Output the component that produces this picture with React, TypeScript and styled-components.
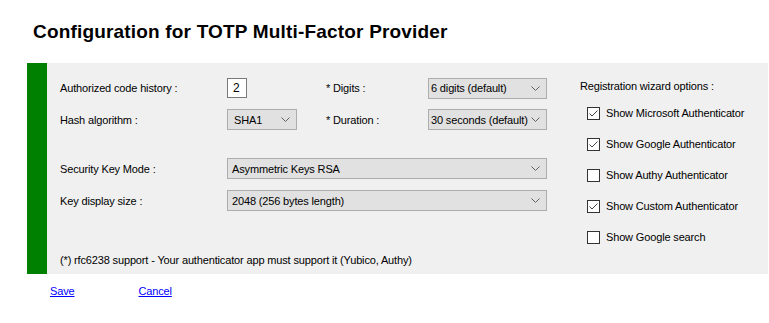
import React from "react";
import styled, { createGlobalStyle } from "styled-components";

const Global = createGlobalStyle`
  html, body { margin: 0; padding: 0; background: #ffffff; }
  body { font-family: "Liberation Sans", Arial, sans-serif; color: #000; }
`;

const Page = styled.div`
  width: 769px;
  height: 323px;
  display: flex;
  flex-direction: column;
  overflow: hidden;
`;

const Title = styled.h1`
  margin: 0;
  padding: 20px 0 0 33px;
  height: 63px;
  box-sizing: border-box;
  font-family: "Liberation Sans", Arial, sans-serif;
  font-weight: bold;
  font-size: 19px;
  letter-spacing: 0.18px;
  line-height: 24px;
`;

const Panel = styled.div`
  margin-left: 27px;
  width: 741px;
  height: 211px;
  display: flex;
  background: #f0f0f0;
`;

const GreenBar = styled.div`
  width: 20px;
  flex: none;
  background: #008000;
`;

const Body = styled.div`
  flex: 1;
  display: flex;
  flex-direction: column;
  padding: 0 0 0 13px;
  font-size: 11px;
  letter-spacing: -0.15px;
`;

const Top = styled.div`
  display: flex;
  gap: 33px;
`;

const Form = styled.div`
  padding-top: 15px;
  display: grid;
  grid-template-columns: 167px 99px 102px 119px;
  grid-template-rows: 20px 21px 6px 21px 21px;
  row-gap: 11px;
  align-items: center;
`;

const Label = styled.div`
  line-height: 14px;
`;

const Spacer = styled.div`
  grid-column: 1 / -1;
`;

const TextBox = styled.div`
  width: 20px;
  height: 20px;
  box-sizing: border-box;
  border: 1px solid #7a7a7a;
  background: #fff;
  font-size: 12px;
  line-height: 18px;
  padding-left: 5px;
`;

const SelectBox = styled.div<{ $width: number; $span?: boolean; $pad: number }>`
  width: ${(p) => p.$width}px;
  height: 21px;
  box-sizing: border-box;
  border: 1px solid #adadad;
  background: #e1e1e1;
  display: flex;
  align-items: center;
  justify-content: space-between;
  padding: 0 6px 0 ${(p) => p.$pad}px;
  grid-column: ${(p) => (p.$span ? "2 / -1" : "auto")};
  white-space: nowrap;
  overflow: hidden;
`;

const Chevron = () => (
  <svg width="9" height="5" viewBox="0 0 9 5" style={{ flex: "none" }}>
    <path d="M0.5 0.5 L4.5 4.5 L8.5 0.5" fill="none" stroke="#606060" strokeWidth="1" />
  </svg>
);

const Select = ({ value, width, span, pad = 2 }: { value: string; width: number; span?: boolean; pad?: number }) => (
  <SelectBox $width={width} $span={span} $pad={pad}>
    <span>{value}</span>
    <Chevron />
  </SelectBox>
);

const Options = styled.div`
  padding-top: 16px;
  display: flex;
  flex-direction: column;
  gap: 17px;
`;

const OptionsTitle = styled.div`
  line-height: 14px;
  margin-bottom: -4px;
`;

const CheckRow = styled.label`
  display: flex;
  align-items: center;
  gap: 6px;
  height: 14px;
  margin-left: 7px;
`;

const Box = styled.span`
  width: 13px;
  height: 13px;
  box-sizing: border-box;
  border: 1px solid #333;
  background: #fff;
  display: flex;
  align-items: center;
  justify-content: center;
`;

const Check = ({ checked, label }: { checked: boolean; label: string }) => (
  <CheckRow>
    <Box>
      {checked && (
        <svg width="11" height="11" viewBox="0 0 11 11">
          <path d="M1.5 5.5 L4 8 L9.5 2.5" fill="none" stroke="#444" strokeWidth="1" />
        </svg>
      )}
    </Box>
    <span>{label}</span>
  </CheckRow>
);

const Footnote = styled.div`
  margin-top: auto;
  margin-bottom: 7px;
  line-height: 14px;
`;

const Actions = styled.div`
  display: flex;
  padding: 11px 0 0 50px;
  gap: 64px;
  font-size: 11px;
  letter-spacing: -0.15px;
`;

const Link = styled.a`
  color: #0000ff;
  text-decoration: underline;
  cursor: pointer;
`;

export default function App() {
  return (
    <Page>
      <Global />
      <Title>Configuration for TOTP Multi-Factor Provider</Title>
      <Panel>
        <GreenBar />
        <Body>
          <Top>
            <Form>
              <Label>Authorized code history :</Label>
              <TextBox>2</TextBox>
              <Label>* Digits :</Label>
              <Select value="6 digits (default)" width={119} />
              <Label>Hash algorithm :</Label>
              <Select value="SHA1" width={70} pad={6} />
              <Label>* Duration :</Label>
              <Select value="30 seconds (default)" width={119} />
              <Spacer />
              <Label>Security Key Mode :</Label>
              <Select value="Asymmetric Keys RSA" width={320} span pad={4} />
              <Label>Key display size :</Label>
              <Select value="2048 (256 bytes length)" width={320} span pad={4} />
            </Form>
            <Options>
              <OptionsTitle>Registration wizard options :</OptionsTitle>
              <Check checked label="Show Microsoft Authenticator" />
              <Check checked label="Show Google Authenticator" />
              <Check checked={false} label="Show Authy Authenticator" />
              <Check checked label="Show Custom Authenticator" />
              <Check checked={false} label="Show Google search" />
            </Options>
          </Top>
          <Footnote>(*) rfc6238 support - Your authenticator app must support it (Yubico, Authy)</Footnote>
        </Body>
      </Panel>
      <Actions>
        <Link>Save</Link>
        <Link>Cancel</Link>
      </Actions>
    </Page>
  );
}
